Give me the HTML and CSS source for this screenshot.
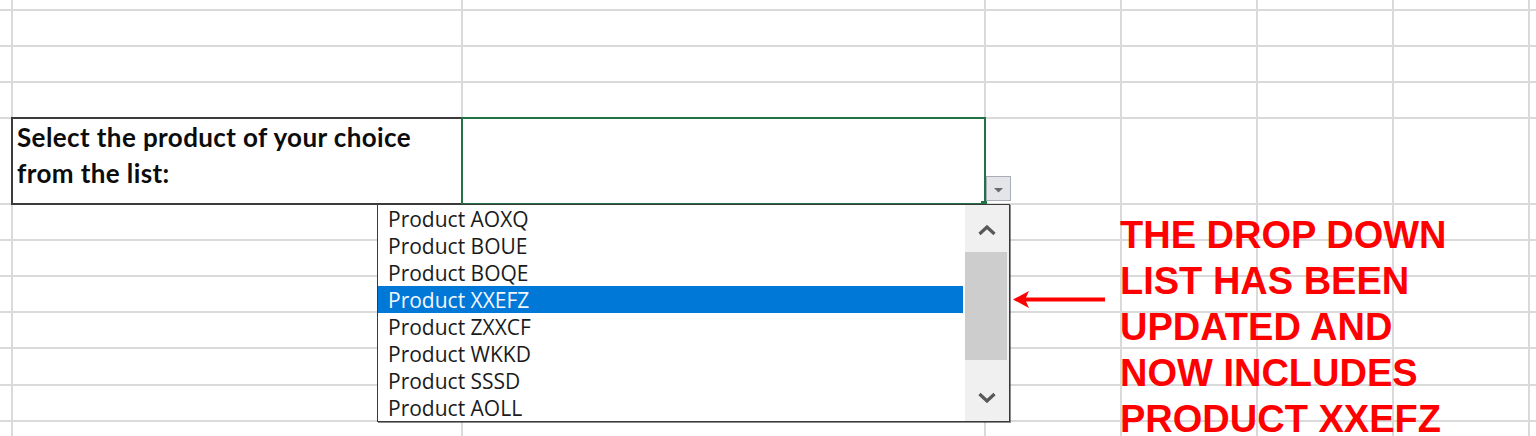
FILE: index.html
```html
<!DOCTYPE html>
<html>
<head>
<meta charset="UTF-8">
<title>Product drop down</title>
<link rel="stylesheet" href="styles.css">
</head>
<body>

<div class="sheet">
    <div class="cell label">Select the product of your choice<br>from the list:</div>
    <div class="cell picked">
        <span class="drop-btn"><svg width="9" height="5" viewBox="0 0 9 5"><polygon points="0,0 9,0 4.5,4.5" fill="#6b6b6b"/></svg></span>
        <span class="handle"></span>
    </div>

    <div class="note">
        <svg class="arrow" width="92" height="17" viewBox="0 0 92 17"><path d="M0 8.5 L16 0 L13 6.5 L92 6.5 L92 10.5 L13 10.5 L16 17 Z" fill="#ff0000"/></svg>
        <p class="note-text">THE DROP DOWN<br>LIST HAS BEEN<br>UPDATED AND<br>NOW INCLUDES<br>PRODUCT XXEFZ</p>
    </div>

    <!-- open list under the selected cell -->
    <div class="dropdown">
        <ul class="options">
            <li>Product AOXQ</li>
            <li>Product BOUE</li>
            <li>Product BOQE</li>
            <li class="selected">Product XXEFZ</li>
            <li>Product ZXXCF</li>
            <li>Product WKKD</li>
            <li>Product SSSD</li>
            <li>Product AOLL</li>
        </ul>
        <div class="scrollbar">
            <span class="scroll-btn"><svg width="18" height="11" viewBox="0 0 18 11"><polyline points="1.5,9 9,2 16.5,9" fill="none" stroke="#585858" stroke-width="3.2"/></svg></span>
            <span class="thumb"></span>
            <span class="scroll-btn down"><svg width="18" height="11" viewBox="0 0 18 11"><polyline points="1.5,2 9,9 16.5,2" fill="none" stroke="#585858" stroke-width="3.2"/></svg></span>
        </div>
    </div>
</div>

</body>
</html>
```

FILE: styles.css
```css
* {
margin: 0;
padding: 0;
box-sizing: border-box;
}

html, body {
background: #fff;
overflow: hidden;
}

/* worksheet, grid lines drawn as background strips */
.sheet {
position: relative;
display: grid;
grid-template-columns: 12px 450px 523px 136px 136px 136px 136px 1fr;
grid-template-rows: 10px 36px 36px 36px 86px repeat(6, 36px) 1fr;
height: 436px;
overflow: hidden;
background-color: #fff;
background-image:
 linear-gradient(#dadada, #dadada), linear-gradient(#dadada, #dadada),
 linear-gradient(#dadada, #dadada), linear-gradient(#dadada, #dadada),
 linear-gradient(#dadada, #dadada), linear-gradient(#dadada, #dadada),
 linear-gradient(#dadada, #dadada),
 linear-gradient(#dadada, #dadada), linear-gradient(#dadada, #dadada),
 linear-gradient(#dadada, #dadada), linear-gradient(#dadada, #dadada),
 linear-gradient(#dadada, #dadada), linear-gradient(#dadada, #dadada),
 linear-gradient(#dadada, #dadada), linear-gradient(#dadada, #dadada),
 linear-gradient(#dadada, #dadada), linear-gradient(#dadada, #dadada),
 linear-gradient(#dadada, #dadada);
background-repeat: no-repeat;
background-size:
 2px 100%, 2px 100%, 2px 100%, 2px 100%, 2px 100%, 2px 100%, 2px 100%,
 100% 2px, 100% 2px, 100% 2px, 100% 2px, 100% 2px, 100% 2px,
 100% 2px, 100% 2px, 100% 2px, 100% 2px, 100% 2px;
background-position:
 11px 0, 461px 0, 984px 0, 1120px 0, 1256px 0, 1392px 0, 1528px 0,
 0 9px, 0 45px, 0 81px, 0 117px, 0 203px, 0 239px,
 0 275px, 0 311px, 0 347px, 0 384px, 0 420px;
}

.cell {
grid-row: 5;
margin: -1px;
}

.label {
grid-column: 2;
border: 2px solid #3b3b3b;
padding: 0 0 0 4px;
font-family: Lato, "Liberation Sans", sans-serif;
font-weight: 700;
font-size: 26px;
letter-spacing: 0.4px;
line-height: 36px;
color: #0c0c0c;
}

.picked {
grid-column: 3;
position: relative;
border: 2px solid #217346;
}

.drop-btn {
position: absolute;
right: -27px;
bottom: 2px;
width: 25px;
height: 25px;
display: flex;
align-items: center;
justify-content: center;
padding-top: 3px;
background: #e3e5e9;
border: 1px solid #a9aeb6;
}

.drop-btn svg {
display: block;
}

.handle {
position: absolute;
right: -3px;
bottom: -4px;
width: 6px;
height: 6px;
background: #217346;
}

/* red call-out */
.note {
grid-column: 4 / -1;
grid-row: 6 / -1;
display: flex;
align-items: flex-start;
}

.arrow {
display: block;
flex: none;
margin: 87px 0 0 28px;
}

.note-text {
margin: 8px 0 0 15px;
font-family: "Liberation Sans", Arial, sans-serif;
font-weight: 700;
font-size: 38px;
line-height: 46px;
color: #ff0000;
white-space: nowrap;
}

/* list box */
.dropdown {
position: absolute;
left: 377px;
top: 204px;
width: 633px;
height: 218px;
display: flex;
background: #fff;
border: 1px solid #3a3a3a;
box-shadow: 1px 1px 0 rgba(0, 0, 0, 0.45);
}

.options {
list-style: none;
width: 585px;
margin-right: 2px;
font-family: "Open Sans", "Noto Sans", sans-serif;
font-size: 21px;
color: #1b1b1b;
}

.options li {
height: 27px;
padding: 2px 0 0 10px;
line-height: 25px;
white-space: nowrap;
}

.options li.selected {
background: #0078d7;
color: #f2f7fd;
}

.scrollbar {
flex: 1;
display: flex;
flex-direction: column;
background: #f0f0f0;
}

.scroll-btn {
height: 47px;
display: flex;
align-items: center;
justify-content: center;
padding-top: 3px;
}

.scroll-btn.down {
margin-top: auto;
padding-top: 0;
}

.thumb {
height: 108px;
margin-right: 2px;
background: #cdcdcd;
}
```
